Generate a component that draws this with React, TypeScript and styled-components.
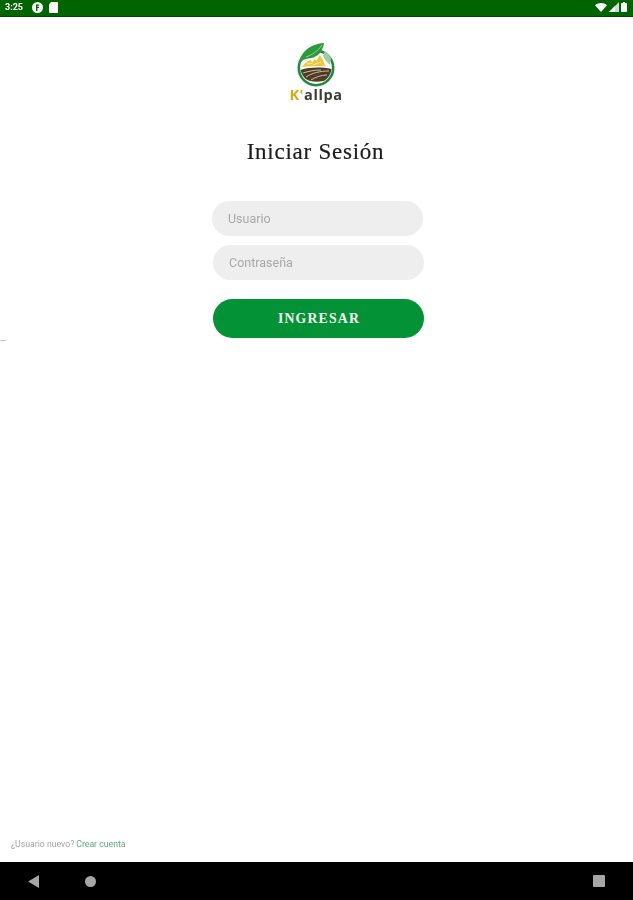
import { createGlobalStyle, styled } from "styled-components";

const GlobalStyle = createGlobalStyle`
  html, body {
    margin: 0;
    padding: 0;
    background: #fff;
    font-family: Roboto, "Liberation Sans", sans-serif;
  }
  * { box-sizing: border-box; }
`;

const Page = styled.div`
  position: relative;
  width: 633px;
  height: 900px;
  display: flex;
  flex-direction: column;
  overflow: hidden;
  background: #fff;
`;

const StatusBar = styled.header`
  height: 17px;
  flex: none;
  display: flex;
  align-items: center;
  justify-content: space-between;
  padding: 0 6px 2px 5px;
  background: #006400;
  border-bottom: 1px solid #0b3f0b;
  color: #fff;
`;

const StatusGroup = styled.div<{ $gap: number }>`
  display: flex;
  align-items: center;
  gap: ${(p) => p.$gap}px;
  filter: blur(0.3px);
`;

const Clock = styled.span`
  font-size: 9px;
  font-weight: 700;
  margin-right: 3px;
`;

const Main = styled.main`
  flex: 1;
  display: flex;
  flex-direction: column;
  align-items: center;
  padding-top: 26px;
`;

const LogoBlock = styled.div`
  display: flex;
  flex-direction: column;
  align-items: center;
  margin-left: -1px;
`;

const LogoMark = styled.svg`
  filter: blur(0.4px);
`;

const Brand = styled.div`
  font-family: "Open Sans", sans-serif;
  font-size: 14.5px;
  line-height: 16px;
  font-weight: 700;
  letter-spacing: 0.6px;
  color: #3b3a34;
  filter: blur(0.4px);
`;

const BrandK = styled.span`
  color: #d2ac12;
`;

const Title = styled.h1`
  margin: 35px 0 0 -2px;
  font-family: "Liberation Serif", serif;
  font-size: 23px;
  line-height: 28px;
  font-weight: 400;
  letter-spacing: 0.75px;
  color: #1c1c1c;
  -webkit-text-stroke: 0.2px #1c1c1c;
  filter: blur(0.35px);
`;

const Form = styled.form`
  width: 211px;
  margin: 35px 0 0 4px;
  display: flex;
  flex-direction: column;
`;

const Field = styled.div<{ $shift?: number }>`
  height: 35px;
  margin-bottom: 9px;
  transform: translateX(${(p) => p.$shift ?? 0}px);
  padding: 0 16px;
  display: flex;
  align-items: center;
  border-radius: 18px;
  background: #eeeeee;
  font-size: 12.5px;
  color: #a8a8a8;
`;

const FieldLabel = styled.span`
  filter: blur(0.35px);
`;

const SubmitButton = styled.button`
  height: 39px;
  margin-top: 10px;
  padding: 1px 0 0 1px;
  border: 0;
  border-radius: 20px;
  background: #049237;
  color: #f4fbf0;
  font-family: "Liberation Serif", serif;
  font-size: 13.8px;
  font-weight: 700;
  letter-spacing: 1.15px;
`;

const EdgeMark = styled.div`
  position: absolute;
  left: 0;
  top: 340px;
  width: 6px;
  height: 1px;
  background: #c9c9c9;
`;

const Footer = styled.footer`
  height: 36px;
  flex: none;
  padding: 13px 0 0 11px;
  font-size: 8.7px;
  line-height: 11px;
  color: #a2a2a2;
  filter: blur(0.35px);
`;

const FooterLink = styled.a`
  color: #5aa97a;
  margin-left: 2px;
`;

const NavBar = styled.nav`
  height: 38px;
  flex: none;
  display: flex;
  align-items: center;
  padding: 0 28px;
  background: #000;
`;

const NavSpacer = styled.div`
  flex: 1;
`;

const CircleKey = styled.div`
  width: 11px;
  height: 11px;
  margin-left: 46px;
  border-radius: 50%;
  background: #a6a6a6;
  filter: blur(0.4px);
`;

const SquareKey = styled.div`
  width: 12px;
  height: 12px;
  border-radius: 1px;
  background: #a6a6a6;
  filter: blur(0.4px);
`;

function PlayBadge() {
  return (
    <svg width="11" height="11" viewBox="0 0 11 11">
      <circle cx="5.5" cy="5.5" r="5.5" fill="#fff" />
      <path d="M4 2.5h3.2v1.3H5.4v1h1.6v1.2H5.4V9H4z" fill="#006400" />
    </svg>
  );
}

function DocIcon() {
  return (
    <svg width="9" height="11" viewBox="0 0 9 11">
      <path d="M2 0h6a1 1 0 0 1 1 1v9a1 1 0 0 1-1 1H1a1 1 0 0 1-1-1V2.4z" fill="#fff" />
    </svg>
  );
}

function SignalIcon() {
  return (
    <svg width="10" height="10" viewBox="0 0 10 10">
      <path d="M10 0v10H0z" fill="#cfdccf" />
      <path d="M6 4v6H0z" fill="#fff" />
    </svg>
  );
}

function BatteryIcon() {
  return (
    <svg width="6" height="10" viewBox="0 0 6 10">
      <path d="M2 0h2v1h1a1 1 0 0 1 1 1v7a1 1 0 0 1-1 1H1a1 1 0 0 1-1-1V2a1 1 0 0 1 1-1h1z" fill="#fff" />
    </svg>
  );
}

function WifiIcon() {
  return (
    <svg width="12" height="9" viewBox="0 0 12 9">
      <path d="M0 2.2C3.4-.7 8.6-.7 12 2.2L6 9z" fill="#fff" />
    </svg>
  );
}

function BackKey() {
  return (
    <svg width="11" height="13" viewBox="0 0 11 13">
      <path d="M11 0v13L0 6.5z" fill="#a6a6a6" />
    </svg>
  );
}

function Logo() {
  return (
    <LogoMark width="40" height="44" viewBox="0 0 40 44">
      <circle cx="20" cy="25" r="17.2" fill="#fff" stroke="#1f8a3a" strokeWidth="2.6" />
      {/* leaf */}
      <path d="M3 22C3 11 13 1 28 0c-1 8-6 14-13 15-4 .5-7 1-9 3z" fill="#2c9a3c" />
      <path d="M10 14c6-2 12-6 16-12" stroke="#bfe3b5" strokeWidth="0.7" fill="none" />
      {/* wheat */}
      <path d="M6 24c2-3 5-6 9-7l1 2 3-3 1 2 4-6 3 5 2 6c-8 0-16 0-23 1z" fill="#ecc93a" />
      <path d="M11 21l6-1M17 22l8-3" stroke="#fff3b8" strokeWidth="0.9" fill="none" />
      {/* ribbon */}
      <path d="M29 8l6 7-1 7-4-4-3-5z" fill="#9ccfa6" />
      {/* soil */}
      <path d="M4.5 27c9-3 21-3 31-1-1 6-4 10-8 12-6 1-12 1-16-1-4-2-6-6-7-10z" fill="#4f3b2a" />
      <path d="M10 34c6-4 14-6 23-6M15 37c5-3 10-5 16-5M7 30c6-2 12-3 18-3" stroke="#cdbd9c" strokeWidth="1" fill="none" />
    </LogoMark>
  );
}

export default function App() {
  return (
    <Page>
      <GlobalStyle />
      <StatusBar>
        <StatusGroup $gap={6}>
          <Clock>3:25</Clock>
          <PlayBadge />
          <DocIcon />
        </StatusGroup>
        <StatusGroup $gap={2}>
          <WifiIcon />
          <SignalIcon />
          <BatteryIcon />
        </StatusGroup>
      </StatusBar>
      <Main>
        <LogoBlock>
          <Logo />
          <Brand>
            <BrandK>K'</BrandK>allpa
          </Brand>
        </LogoBlock>
        <Title>Iniciar Sesión</Title>
        <Form>
          <Field $shift={-1}>
            <FieldLabel>Usuario</FieldLabel>
          </Field>
          <Field>
            <FieldLabel>Contraseña</FieldLabel>
          </Field>
          <SubmitButton type="button">INGRESAR</SubmitButton>
        </Form>
      </Main>
      <EdgeMark />
      <Footer>
        ¿Usuario nuevo?<FooterLink>Crear cuenta</FooterLink>
      </Footer>
      <NavBar>
        <BackKey />
        <CircleKey />
        <NavSpacer />
        <SquareKey />
      </NavBar>
    </Page>
  );
}
